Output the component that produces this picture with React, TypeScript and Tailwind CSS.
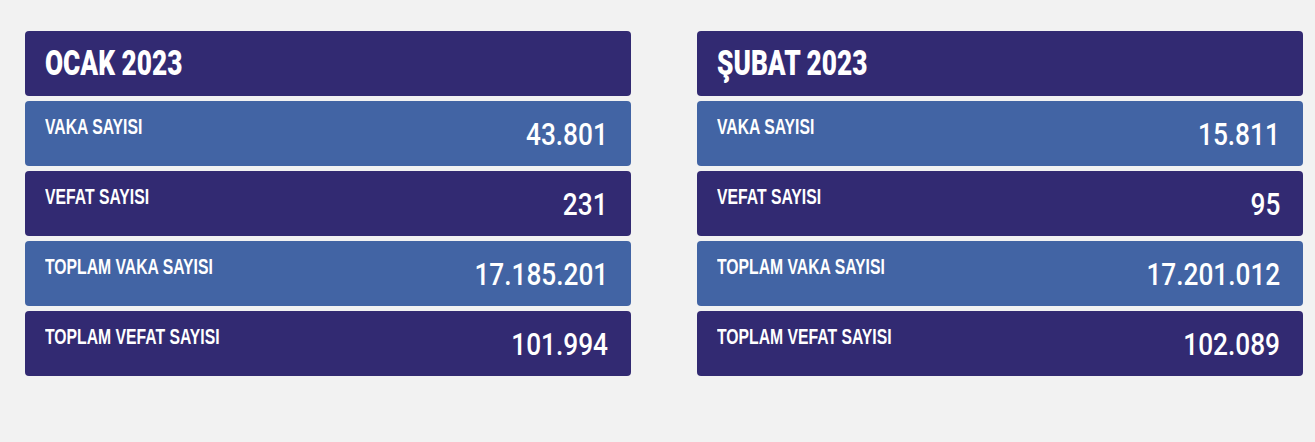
const months = [
  {
    title: 'OCAK 2023',
    rows: [
      { label: 'VAKA SAYISI', value: '43.801' },
      { label: 'VEFAT SAYISI', value: '231' },
      { label: 'TOPLAM VAKA SAYISI', value: '17.185.201' },
      { label: 'TOPLAM VEFAT SAYISI', value: '101.994' },
    ],
  },
  {
    title: 'ŞUBAT 2023',
    rows: [
      { label: 'VAKA SAYISI', value: '15.811' },
      { label: 'VEFAT SAYISI', value: '95' },
      { label: 'TOPLAM VAKA SAYISI', value: '17.201.012' },
      { label: 'TOPLAM VEFAT SAYISI', value: '102.089' },
    ],
  },
];

// no condensed face installed, so the text is squeezed with scale-x
const font = { fontFamily: '"Liberation Sans", Arial, sans-serif' };
const robo = { fontFamily: 'Roboto, "Liberation Sans", sans-serif' };

export default function App() {
  return (
    <div className="min-h-[442px] w-full bg-[#f2f2f2] pt-[31px] pl-[25px]" style={font}>
      <div className="flex gap-[66px]">
        {months.map((m) => (
          <div key={m.title} className="w-[606px] flex flex-col gap-[5px]">
            {/* header */}
            <div className="h-[65px] rounded bg-[#322a72] flex items-center px-5">
              <span
                className="inline-block origin-left scale-x-[0.75] whitespace-nowrap text-white font-black text-[35px] leading-none"
                style={robo}
              >
                {m.title}
              </span>
            </div>

            {m.rows.map((r, i) => (
              <div
                key={r.label}
                className={`h-[65px] rounded flex items-center justify-between pl-5 pr-6 ${i % 2 === 0 ? 'bg-[#4264a4]' : 'bg-[#322a72]'}`}
              >
                <span className="self-start mt-[15px] inline-block origin-left scale-x-[0.715] whitespace-nowrap text-white font-bold text-[22px] leading-none">
                  {r.label}
                </span>
                <span
                  className="inline-block origin-right scale-x-[0.82] whitespace-nowrap text-white font-medium text-[32px] leading-none -mr-px"
                  style={robo}
                >
                  {r.value}
                </span>
              </div>
            ))}
          </div>
        ))}
      </div>
    </div>
  );
}
